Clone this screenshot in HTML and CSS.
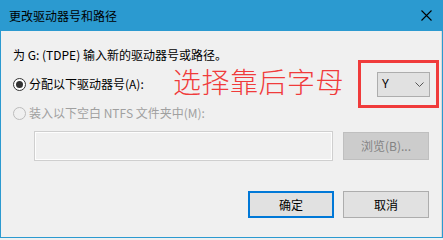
FILE: index.html
```html
<!DOCTYPE html>
<html lang="zh-CN">
<head>
<meta charset="utf-8">
<title>更改驱动器号和路径</title>
<link rel="stylesheet" href="styles.css">
</head>
<body>
<div class="window">
  <div class="titlebar">
    <span class="title">更改驱动器号和路径</span>
    <svg class="close" width="11" height="11" viewBox="0 0 11 11"><path d="M0.5 0.5 L10.5 10.5 M10.5 0.5 L0.5 10.5" stroke="#000" stroke-width="1.1" fill="none"/></svg>
  </div>
  <div class="content">
    <div class="prompt">为 G: (TDPE) 输入新的驱动器号或路径。</div>
    <div class="row row-assign">
      <span class="radio checked"><span class="dot"></span></span>
      <span class="label">分配以下驱动器号(A):</span>
      <div class="combo-wrap">
        <div class="combo">
          <span class="combo-value">Y</span>
          <svg class="chevron" width="9" height="5" viewBox="0 0 9 5"><path d="M0.5 0.5 L4.5 4.5 L8.5 0.5" stroke="#555" stroke-width="1" fill="none"/></svg>
        </div>
        <div class="mark-box"></div>
      </div>
    </div>
    <div class="row row-mount">
      <span class="radio disabled"></span>
      <span class="label disabled-text">装入以下空白 NTFS 文件夹中(M):</span>
    </div>
    <div class="path-row">
      <div class="textbox"></div>
      <div class="btn btn-disabled">浏览(B)...</div>
    </div>
    <div class="actions">
      <div class="btn btn-default">确定</div>
      <div class="btn">取消</div>
    </div>
  </div>
  <div class="annotation">选择靠后字母</div>
</div>
</body>
</html>
```

FILE: styles.css
```css
html, body {
  margin: 0;
  padding: 0;
  background: #f0f0f0;
}

body {
  font-family: "Noto Sans CJK SC", "Noto Sans", sans-serif;
  font-size: 12px;
  color: #000;
}

.window {
  position: relative;
  width: 443px;
  height: 238px;
  box-sizing: border-box;
  border: 1px solid #2b9ad0;
  border-top: none;
  background: #f0f0f0;
  display: flex;
  flex-direction: column;
}

.titlebar {
  height: 31px;
  background: #2b9ad0;
  display: flex;
  align-items: center;
  justify-content: space-between;
  padding: 0 10px 0 8px;
  flex: none;
}

.title {
  font-size: 12px;
  line-height: 16px;
  color: #000;
}

.close {
  display: block;
  margin-top: 0;
}

.content {
  flex: 1;
  display: flex;
  flex-direction: column;
  padding: 16px 12px 0 12px;
  border-right: 1px solid #dadada;
}

.prompt {
  height: 16px;
  line-height: 16px;
}

.row {
  height: 20px;
  display: flex;
  align-items: center;
}

.row-assign {
  margin-top: 11px;
}

.row-mount {
  margin-top: 9px;
}

.radio {
  width: 13px;
  height: 13px;
  box-sizing: border-box;
  border-radius: 50%;
  border: 1px solid #333;
  background: #fff;
  display: flex;
  align-items: center;
  justify-content: center;
  flex: none;
}

.radio.disabled {
  border-color: #bcbcbc;
  background: #f0f0f0;
}

.dot {
  width: 7px;
  height: 7px;
  border-radius: 50%;
  background: #333;
}

.label {
  margin-left: 3px;
  line-height: 16px;
}

.disabled-text {
  color: #a0a0a0;
}

.combo-wrap {
  position: relative;
  margin-left: auto;
  margin-right: -1px;
}

.combo {
  width: 53px;
  height: 25px;
  box-sizing: border-box;
  border: 1px solid #adadad;
  background: #e1e1e1;
  display: flex;
  align-items: center;
  justify-content: space-between;
  padding: 0 5px 0 4px;
}

.combo-value {
  font-family: "Noto Sans", "Liberation Sans", sans-serif;
  font-size: 12px;
  line-height: 16px;
}

.chevron {
  display: block;
}

.mark-box {
  position: absolute;
  left: -19px;
  top: -12px;
  right: -9px;
  bottom: -11px;
  border: 3px solid #f03b3b;
  pointer-events: none;
}

.path-row {
  margin-top: 8px;
  display: flex;
  align-items: center;
  gap: 10px;
  padding-left: 21px;
}

.textbox {
  width: 299px;
  height: 30px;
  box-sizing: border-box;
  border: 1px solid #cfcfcf;
  outline: 1px solid #fdfdfd;
  outline-offset: -2px;
  background: #f0f0f0;
}

.btn {
  width: 86px;
  height: 27px;
  box-sizing: border-box;
  border: 1px solid #adadad;
  background: #e1e1e1;
  display: flex;
  align-items: center;
  justify-content: center;
  line-height: 16px;
  flex: none;
}

.btn-disabled {
  height: 28px;
  background: #cccccc;
  border-color: #bfbfbf;
  color: #838383;
}

.btn-default {
  border: 2px solid #0078d7;
}

.actions {
  margin-top: 30px;
  display: flex;
  justify-content: flex-end;
  gap: 9px;
}

.annotation {
  position: absolute;
  left: 172px;
  top: 66px;
  font-size: 28px;
  line-height: 30px;
  font-weight: 300;
  color: #f03b3b;
  letter-spacing: 0.5px;
}
```
